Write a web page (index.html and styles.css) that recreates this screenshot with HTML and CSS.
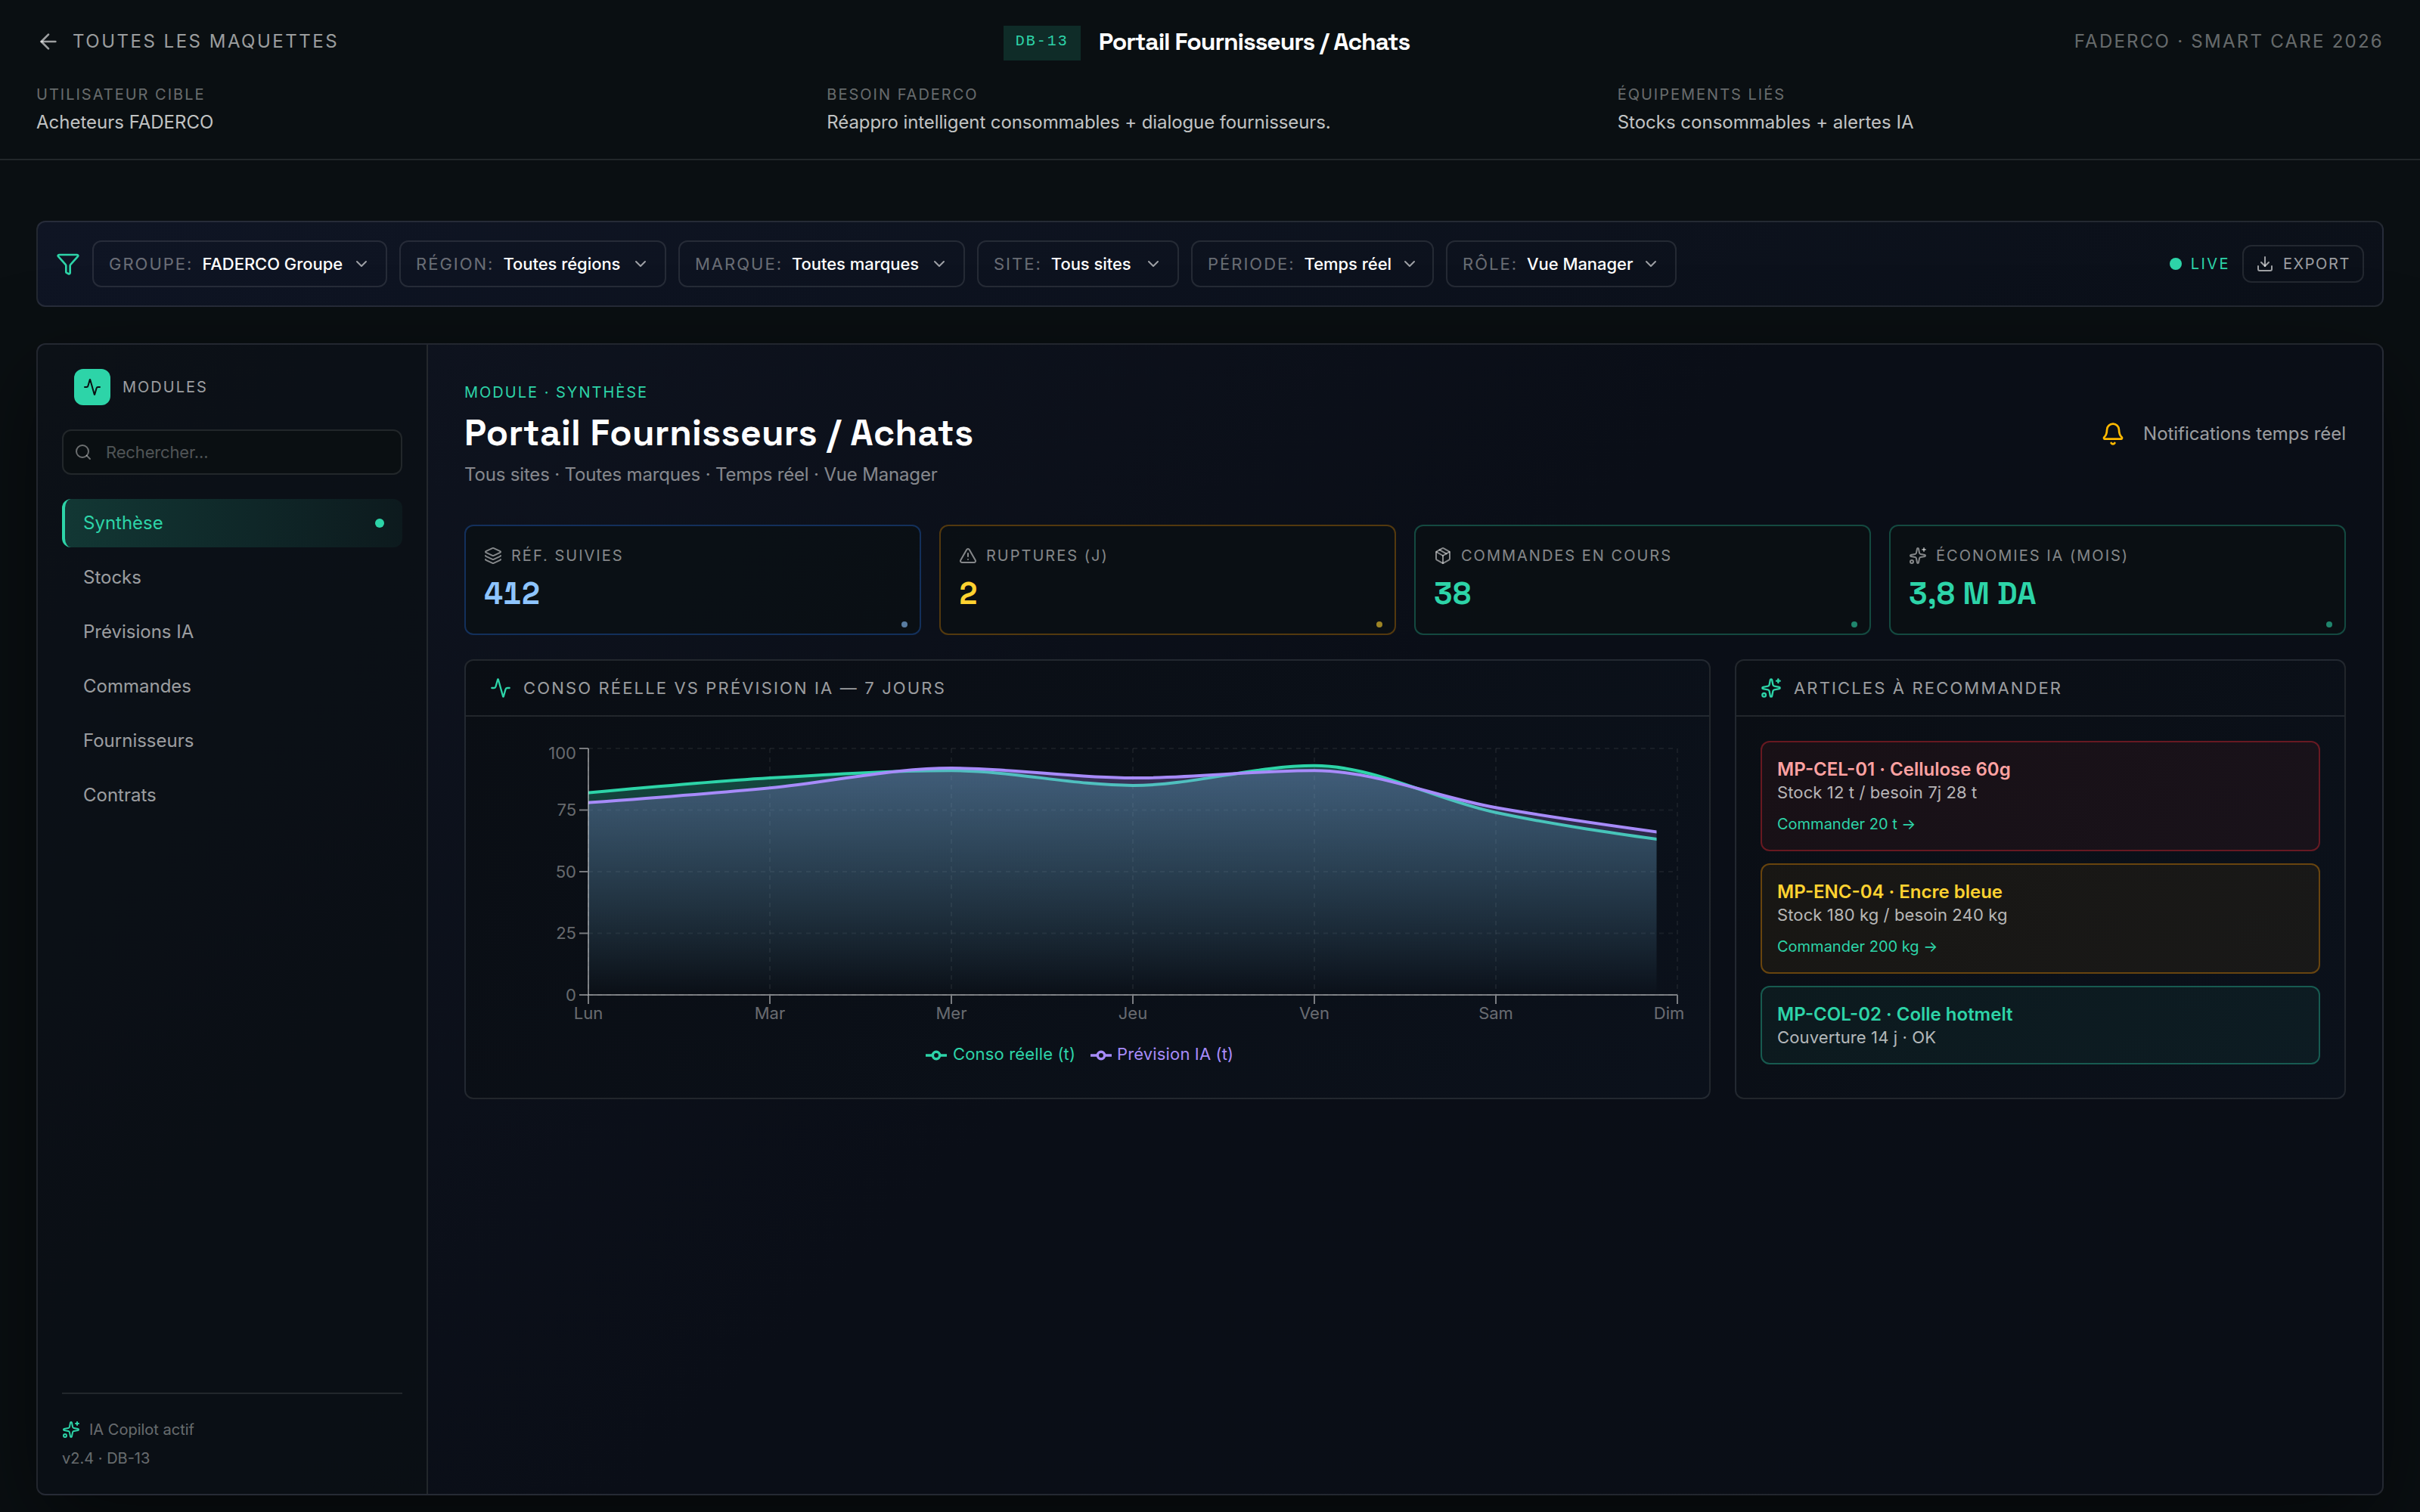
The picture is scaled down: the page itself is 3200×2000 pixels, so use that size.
FILE: index.html
```html
<!DOCTYPE html>
<html lang="fr">
<head>
    <meta charset="UTF-8">
    <meta name="viewport" content="width=device-width, initial-scale=1.0">
    <title>Portail Fournisseurs / Achats</title>
    <link rel="stylesheet" href="styles.css">
</head>
<body>
    <svg class="sprite" aria-hidden="true">
        <symbol id="i-arrow" viewBox="0 0 24 24"><path d="m12 19-7-7 7-7"/><path d="M19 12H5"/></symbol>
        <symbol id="i-funnel" viewBox="0 0 24 24"><path d="M10 20a1 1 0 0 0 .553.895l2 1A1 1 0 0 0 14 21v-7a2 2 0 0 1 .517-1.341L21.74 4.67A1 1 0 0 0 21 3H3a1 1 0 0 0-.742 1.67l7.225 7.989A2 2 0 0 1 10 14z"/></symbol>
        <symbol id="i-chevron" viewBox="0 0 24 24"><path d="m6 9 6 6 6-6"/></symbol>
        <symbol id="i-download" viewBox="0 0 24 24"><path d="M12 15V3"/><path d="M21 15v4a2 2 0 0 1-2 2H5a2 2 0 0 1-2-2v-4"/><path d="m7 10 5 5 5-5"/></symbol>
        <symbol id="i-activity" viewBox="0 0 24 24"><path d="M22 12h-2.48a2 2 0 0 0-1.93 1.46l-2.35 8.36a.25.25 0 0 1-.48 0L9.24 2.18a.25.25 0 0 0-.48 0l-2.35 8.36A2 2 0 0 1 4.49 12H2"/></symbol>
        <symbol id="i-search" viewBox="0 0 24 24"><path d="m21 21-4.34-4.34"/><circle cx="11" cy="11" r="8"/></symbol>
        <symbol id="i-sparkles" viewBox="0 0 24 24"><path d="M11.017 2.814a1 1 0 0 1 1.966 0l1.051 5.558a2 2 0 0 0 1.594 1.594l5.558 1.051a1 1 0 0 1 0 1.966l-5.558 1.051a2 2 0 0 0-1.594 1.594l-1.051 5.558a1 1 0 0 1-1.966 0l-1.051-5.558a2 2 0 0 0-1.594-1.594l-5.558-1.051a1 1 0 0 1 0-1.966l5.558-1.051a2 2 0 0 0 1.594-1.594z"/><path d="M20 2v4"/><path d="M22 4h-4"/><circle cx="4" cy="20" r="2"/></symbol>
        <symbol id="i-bell" viewBox="0 0 24 24"><path d="M10.268 21a2 2 0 0 0 3.464 0"/><path d="M3.262 15.326A1 1 0 0 0 4 17h16a1 1 0 0 0 .74-1.673C19.41 13.956 18 12.499 18 8A6 6 0 0 0 6 8c0 4.499-1.411 5.956-2.738 7.326"/></symbol>
        <symbol id="i-layers" viewBox="0 0 24 24"><path d="M12.83 2.18a2 2 0 0 0-1.66 0L2.6 6.08a1 1 0 0 0 0 1.83l8.58 3.91a2 2 0 0 0 1.66 0l8.58-3.9a1 1 0 0 0 0-1.83z"/><path d="M2 12a1 1 0 0 0 .58.91l8.6 3.91a2 2 0 0 0 1.65 0l8.58-3.9A1 1 0 0 0 22 12"/><path d="M2 17a1 1 0 0 0 .58.91l8.6 3.91a2 2 0 0 0 1.65 0l8.58-3.9A1 1 0 0 0 22 17"/></symbol>
        <symbol id="i-alert" viewBox="0 0 24 24"><path d="m21.73 18-8-14a2 2 0 0 0-3.48 0l-8 14A2 2 0 0 0 4 21h16a2 2 0 0 0 1.73-3"/><path d="M12 9v4"/><path d="M12 17h.01"/></symbol>
        <symbol id="i-package" viewBox="0 0 24 24"><path d="M11 21.73a2 2 0 0 0 2 0l7-4A2 2 0 0 0 21 16V8a2 2 0 0 0-1-1.73l-7-4a2 2 0 0 0-2 0l-7 4A2 2 0 0 0 3 8v8a2 2 0 0 0 1 1.73z"/><path d="M12 22V12"/><path d="M3.29 7 12 12l8.71-5"/><path d="m7.5 4.27 9 5.15"/></symbol>
    </svg>

    <header class="topbar">
        <div class="topbar-row">
            <a class="back"><svg class="icon"><use href="#i-arrow"/></svg><span>TOUTES LES MAQUETTES</span></a>
            <div class="topbar-title">
                <span class="code">DB-13</span>
                <span class="name">Portail Fournisseurs / Achats</span>
            </div>
            <span class="brand">FADERCO · SMART CARE 2026</span>
        </div>
        <div class="meta">
            <div>
                <p class="meta-label">UTILISATEUR CIBLE</p>
                <p class="meta-value">Acheteurs FADERCO</p>
            </div>
            <div>
                <p class="meta-label">BESOIN FADERCO</p>
                <p class="meta-value tight">Réappro intelligent consommables + dialogue fournisseurs.</p>
            </div>
            <div>
                <p class="meta-label">ÉQUIPEMENTS LIÉS</p>
                <p class="meta-value">Stocks consommables + alertes IA</p>
            </div>
        </div>
    </header>

    <section class="filters">
        <svg class="icon icon-lg accent"><use href="#i-funnel"/></svg>
        <button class="filter groupe"><span class="key">GROUPE:</span><span class="val">FADERCO Groupe</span><svg class="icon"><use href="#i-chevron"/></svg></button>
        <button class="filter region"><span class="key">RÉGION:</span><span class="val">Toutes régions</span><svg class="icon"><use href="#i-chevron"/></svg></button>
        <button class="filter marque"><span class="key">MARQUE:</span><span class="val">Toutes marques</span><svg class="icon"><use href="#i-chevron"/></svg></button>
        <button class="filter site"><span class="key">SITE:</span><span class="val">Tous sites</span><svg class="icon"><use href="#i-chevron"/></svg></button>
        <button class="filter periode"><span class="key">PÉRIODE:</span><span class="val">Temps réel</span><svg class="icon"><use href="#i-chevron"/></svg></button>
        <button class="filter role"><span class="key">RÔLE:</span><span class="val">Vue Manager</span><svg class="icon"><use href="#i-chevron"/></svg></button>
        <div class="filters-end">
            <span class="live"><i></i><span>LIVE</span></span>
            <button class="export"><svg class="icon"><use href="#i-download"/></svg><span>EXPORT</span></button>
        </div>
    </section>

    <div class="shell">
        <aside class="sidebar">
            <div class="modules"><span class="logo"><svg class="icon"><use href="#i-activity"/></svg></span><span class="modules-text">MODULES</span></div>
            <div class="search"><svg class="icon"><use href="#i-search"/></svg><span>Rechercher...</span></div>
            <nav>
                <a class="nav-item active"><span>Synthèse</span><i></i></a>
                <a class="nav-item">Stocks</a>
                <a class="nav-item">Prévisions IA</a>
                <a class="nav-item">Commandes</a>
                <a class="nav-item">Fournisseurs</a>
                <a class="nav-item">Contrats</a>
            </nav>
            <div class="sidebar-foot">
                <div class="copilot"><svg class="icon accent"><use href="#i-sparkles"/></svg><span>IA Copilot actif</span></div>
                <div>v2.4 · DB-13</div>
            </div>
        </aside>

        <main class="content">
            <div class="head">
                <div>
                    <p class="eyebrow">MODULE · SYNTHÈSE</p>
                    <h1>Portail Fournisseurs / Achats</h1>
                    <p class="sub">Tous sites · Toutes marques · Temps réel · Vue Manager</p>
                </div>
                <div class="notif"><svg class="icon icon-lg"><use href="#i-bell"/></svg><span>Notifications temps réel</span></div>
            </div>

            <div class="kpis">
                <div class="kpi blue">
                    <div class="kpi-label"><svg class="icon"><use href="#i-layers"/></svg><span>RÉF. SUIVIES</span></div>
                    <div class="kpi-value">412</div>
                    <i></i>
                </div>
                <div class="kpi amber">
                    <div class="kpi-label"><svg class="icon"><use href="#i-alert"/></svg><span>RUPTURES (J)</span></div>
                    <div class="kpi-value">2</div>
                    <i></i>
                </div>
                <div class="kpi green">
                    <div class="kpi-label"><svg class="icon"><use href="#i-package"/></svg><span>COMMANDES EN COURS</span></div>
                    <div class="kpi-value">38</div>
                    <i></i>
                </div>
                <div class="kpi green">
                    <div class="kpi-label"><svg class="icon"><use href="#i-sparkles"/></svg><span>ÉCONOMIES IA (MOIS)</span></div>
                    <div class="kpi-value">3,8 M DA</div>
                    <i></i>
                </div>
            </div>

            <div class="panels">
                <section class="panel">
                    <h2><svg class="icon accent"><use href="#i-activity"/></svg><span>CONSO RÉELLE VS PRÉVISION IA — 7 JOURS</span></h2>
                    <div class="panel-body">
                        <svg class="chart" width="1580" height="440" viewBox="0 0 1580 440">
                            <defs>
                                <linearGradient id="gConso" x1="0" y1="0" x2="0" y2="1"><stop offset="0" stop-color="#2dd4a8" stop-opacity=".3"/><stop offset="1" stop-color="#2dd4a8" stop-opacity="0"/></linearGradient>
                                <linearGradient id="gPrev" x1="0" y1="0" x2="0" y2="1"><stop offset="0" stop-color="#a78bfa" stop-opacity=".3"/><stop offset="1" stop-color="#a78bfa" stop-opacity="0"/></linearGradient>
                                <clipPath id="reveal"><rect x="130" y="0" width="1412.5" height="346"/></clipPath>
                            </defs>
                            <g class="grid">
                                <path d="M130 10H1570M130 91.5H1570M130 173H1570M130 254.5H1570M130 336H1570"/>
                                <path d="M130 10V336M370 10V336M610 10V336M850 10V336M1090 10V336M1330 10V336M1570 10V336"/>
                            </g>
                            <g clip-path="url(#reveal)">
                                <path fill="url(#gConso)" d="M130,68.68C210,61.35 290,54.01 370,49.12C450,44.23 530,39.34 610,39.34C690,39.34 770,58.9 850,58.9C930,58.9 1010,32.82 1090,32.82C1170,32.82 1250,77.92 1330,94.76C1410,111.6 1490,122.74 1570,133.88V336H130Z"/>
                                <path class="line conso" d="M130,68.68C210,61.35 290,54.01 370,49.12C450,44.23 530,39.34 610,39.34C690,39.34 770,58.9 850,58.9C930,58.9 1010,32.82 1090,32.82C1170,32.82 1250,77.92 1330,94.76C1410,111.6 1490,122.74 1570,133.88"/>
                                <path fill="url(#gPrev)" d="M130,81.72C210,75.74 290,69.77 370,62.16C450,54.55 530,36.08 610,36.08C690,36.08 770,49.12 850,49.12C930,49.12 1010,39.34 1090,39.34C1170,39.34 1250,74.11 1330,88.24C1410,102.37 1490,113.23 1570,124.1V336H130Z"/>
                                <path class="line prev" d="M130,81.72C210,75.74 290,69.77 370,62.16C450,54.55 530,36.08 610,36.08C690,36.08 770,49.12 850,49.12C930,49.12 1010,39.34 1090,39.34C1170,39.34 1250,74.11 1330,88.24C1410,102.37 1490,113.23 1570,124.1"/>
                            </g>
                            <g class="axis">
                                <path d="M130 10V336M118 10H130M118 91.5H130M118 173H130M118 254.5H130M118 336H130"/>
                                <path d="M130 336H1570M130 336V348M370 336V348M610 336V348M850 336V348M1090 336V348M1330 336V348M1570 336V348"/>
                            </g>
                            <g class="ticks" text-anchor="end">
                                <text x="114" y="24">100</text>
                                <text x="114" y="99">75</text>
                                <text x="114" y="181">50</text>
                                <text x="114" y="262">25</text>
                                <text x="114" y="344">0</text>
                            </g>
                            <g class="ticks" text-anchor="middle">
                                <text x="130" y="368">Lun</text>
                                <text x="370" y="368">Mar</text>
                                <text x="610" y="368">Mer</text>
                                <text x="850" y="368">Jeu</text>
                                <text x="1090" y="368">Ven</text>
                                <text x="1330" y="368">Sam</text>
                                <text x="1559" y="368">Dim</text>
                            </g>
                            <g class="legend conso"><path transform="translate(576 402) scale(.875)" d="M0,16h10.667A5.333,5.333,0,1,1,21.333,16H32M21.333,16A5.333,5.333,0,1,1,10.667,16"/><text x="612" y="422">Conso réelle (t)</text></g>
                            <g class="legend prev"><path transform="translate(794 402) scale(.875)" d="M0,16h10.667A5.333,5.333,0,1,1,21.333,16H32M21.333,16A5.333,5.333,0,1,1,10.667,16"/><text x="829" y="422">Prévision IA (t)</text></g>
                        </svg>
                    </div>
                </section>

                <section class="panel">
                    <h2><svg class="icon accent"><use href="#i-sparkles"/></svg><span>ARTICLES À RECOMMANDER</span></h2>
                    <div class="panel-body items">
                        <div class="item red">
                            <p class="item-name">MP-CEL-01 · Cellulose 60g</p>
                            <p class="item-info">Stock 12 t / besoin 7j 28 t</p>
                            <a>Commander 20 t →</a>
                        </div>
                        <div class="item amber">
                            <p class="item-name">MP-ENC-04 · Encre bleue</p>
                            <p class="item-info">Stock 180 kg / besoin 240 kg</p>
                            <a>Commander 200 kg →</a>
                        </div>
                        <div class="item green">
                            <p class="item-name">MP-COL-02 · Colle hotmelt</p>
                            <p class="item-info">Couverture 14 j · OK</p>
                        </div>
                    </div>
                </section>
            </div>
        </main>
    </div>
</body>
</html>
```
FILE: styles.css
```css
* {
    box-sizing: border-box;
    margin: 0;
    padding: 0;
}

body {
    height: 2000px;
    overflow: hidden;
    font-family: Inter, sans-serif;
    font-size: 24px;
    line-height: 1.5;
    color: #ffffff;
    background-color: #0a0f12;
}

button {
    font: inherit;
    color: inherit;
    background: none;
}

.sprite {
    position: absolute;
    width: 0;
    height: 0;
}

.icon {
    width: 24px;
    height: 24px;
    flex: none;
    fill: none;
    stroke: currentColor;
    stroke-width: 2;
    stroke-linecap: round;
    stroke-linejoin: round;
}

.icon-lg {
    width: 32px;
    height: 32px;
}

.accent {
    color: #2dd4a8;
}

/* En-tête */
.topbar {
    height: 212px;
    padding: 32px 48px 0;
    border-bottom: 2px solid rgba(255, 255, 255, 0.1);
}

.topbar-row {
    display: flex;
    justify-content: space-between;
    align-items: center;
    height: 46px;
}

.back {
    display: flex;
    align-items: center;
    gap: 16px;
    color: rgba(255, 255, 255, 0.6);
    letter-spacing: 2.5px;
}

.back .icon {
    width: 32px;
    height: 32px;
}

.topbar-title {
    display: flex;
    align-items: center;
    gap: 24px;
}

.code {
    margin-top: 4px;
    padding: 10px 16px 14px;
    font-family: "Liberation Mono", monospace;
    font-size: 20px;
    line-height: 22px;
    letter-spacing: 2px;
    color: #2dd4a8;
    background-color: rgba(45, 212, 168, 0.15);
}

.name {
    font-family: "Space Grotesk", Inter, sans-serif;
    font-size: 32px;
    font-weight: 600;
    letter-spacing: -1.1px;
}

.brand {
    color: rgba(255, 255, 255, 0.4);
    letter-spacing: 2.25px;
}

.meta {
    display: grid;
    grid-template-columns: repeat(3, 1fr);
    gap: 32px;
    margin-top: 32px;
}

.meta-label {
    font-size: 20px;
    line-height: 30px;
    letter-spacing: 2px;
    color: rgba(255, 255, 255, 0.4);
}

.meta-value {
    margin-top: 4px;
    color: rgba(255, 255, 255, 0.75);
}

.meta-value.tight {
    letter-spacing: -0.1px;
}

/* Barre de filtres */
.filters {
    display: flex;
    align-items: center;
    gap: 16px;
    height: 114px;
    margin: 80px 48px 48px;
    padding: 0 24px;
    border: 2px solid rgba(255, 255, 255, 0.1);
    border-radius: 12px;
    background: linear-gradient(135deg, #0f1524, #0b1019);
}

.filter {
    display: flex;
    align-items: center;
    gap: 12px;
    height: 62px;
    padding: 0 20px;
    font-size: 22px;
    white-space: nowrap;
    border: 2px solid rgba(255, 255, 255, 0.1);
    border-radius: 12px;
}

.filter.groupe { width: 390px; }
.filter.region { width: 353px; }
.filter.marque { width: 379px; }
.filter.site { width: 267px; }
.filter.periode { width: 321px; }
.filter.role { width: 305px; }

.filter .key {
    color: rgba(255, 255, 255, 0.4);
    letter-spacing: 2px;
}

.filter .val {
    font-weight: 500;
    letter-spacing: -0.05px;
}

.filter .icon {
    margin-left: auto;
    color: rgba(255, 255, 255, 0.6);
}

.filters-end {
    display: flex;
    align-items: center;
    gap: 16px;
    margin-left: auto;
    font-size: 20px;
}

.live {
    display: flex;
    align-items: center;
    gap: 12px;
    letter-spacing: 2.4px;
    color: #2dd4a8;
}

.live i {
    width: 16px;
    height: 16px;
    border-radius: 50%;
    background-color: #2dd4a8;
}

.export {
    display: flex;
    align-items: center;
    gap: 12px;
    height: 50px;
    padding: 0 16px;
    letter-spacing: 1.6px;
    color: rgba(255, 255, 255, 0.6);
    border: 2px solid rgba(255, 255, 255, 0.1);
    border-radius: 12px;
}

/* Cadre principal */
.shell {
    display: flex;
    height: 1524px;
    margin: 0 48px;
    border: 2px solid rgba(255, 255, 255, 0.1);
    border-radius: 12px;
    background: linear-gradient(135deg, #0f1420 0%, #0a0e17 50%, #0a0e16 100%);
    box-shadow: 0 40px 120px rgba(0, 0, 0, 0.5);
}

.sidebar {
    display: flex;
    flex-direction: column;
    width: 516px;
    padding: 32px;
    border-right: 2px solid rgba(255, 255, 255, 0.1);
    background-color: rgba(10, 15, 18, 0.6);
    border-radius: 10px 0 0 10px;
}

.modules {
    display: flex;
    align-items: center;
    gap: 16px;
    padding-left: 16px;
}

.logo {
    display: flex;
    align-items: center;
    justify-content: center;
    width: 48px;
    height: 48px;
    border-radius: 12px;
    color: #0a0f12;
    background-color: #2dd4a8;
}

.modules-text {
    font-size: 20px;
    letter-spacing: 2px;
    color: rgba(255, 255, 255, 0.6);
}

.search {
    display: flex;
    align-items: center;
    gap: 18px;
    height: 60px;
    margin: 32px 0;
    padding: 0 14px;
    font-size: 22px;
    letter-spacing: -0.15px;
    color: rgba(255, 255, 255, 0.3);
    border: 2px solid rgba(255, 255, 255, 0.1);
    border-radius: 12px;
    background-color: #0a0f12;
}

.search .icon {
    color: rgba(255, 255, 255, 0.4);
}

nav {
    display: flex;
    flex-direction: column;
    gap: 8px;
}

.nav-item {
    display: flex;
    align-items: center;
    justify-content: space-between;
    height: 64px;
    padding: 0 24px;
    border-left: 4px solid transparent;
    border-radius: 12px;
    color: rgba(255, 255, 255, 0.6);
}

.nav-item.active {
    color: #2dd4a8;
    border-left-color: #2dd4a8;
    background: linear-gradient(90deg, rgba(45, 212, 168, 0.2), rgba(45, 212, 168, 0.05));
}

.nav-item i {
    width: 12px;
    height: 12px;
    border-radius: 50%;
    background-color: #2dd4a8;
}

.sidebar-foot {
    display: flex;
    flex-direction: column;
    gap: 8px;
    margin-top: auto;
    padding-top: 32px;
    font-size: 20px;
    line-height: 30px;
    color: rgba(255, 255, 255, 0.4);
    border-top: 2px solid rgba(255, 255, 255, 0.1);
}

.copilot {
    display: flex;
    align-items: center;
    gap: 12px;
}

.content {
    flex: 1;
    padding: 48px;
}

.head {
    display: flex;
    justify-content: space-between;
    align-items: center;
    height: 142px;
}

.eyebrow {
    font-size: 20px;
    line-height: 30px;
    letter-spacing: 2px;
    color: #2dd4a8;
}

h1 {
    margin: 8px 0 6px;
    font-family: "Space Grotesk", Inter, sans-serif;
    font-size: 48px;
    font-weight: 700;
    line-height: 62px;
    letter-spacing: 0.3px;
}

.sub {
    letter-spacing: -0.17px;
    color: rgba(255, 255, 255, 0.5);
}

.notif {
    display: flex;
    align-items: center;
    gap: 24px;
    margin-bottom: 2px;
    letter-spacing: -0.05px;
    color: rgba(255, 255, 255, 0.6);
}

.notif .icon {
    color: #ffb900;
}

/* Indicateurs */
.kpis {
    display: grid;
    grid-template-columns: repeat(4, 1fr);
    gap: 24px;
    margin: 48px 0 32px;
}

.kpi {
    position: relative;
    height: 146px;
    padding: 24px;
    border: 2px solid;
    border-radius: 12px;
    background-color: rgba(10, 15, 18, 0.7);
}

.kpi-label {
    display: flex;
    align-items: center;
    gap: 12px;
    margin-bottom: 8px;
    font-size: 20px;
    line-height: 30px;
    letter-spacing: 2px;
    color: rgba(255, 255, 255, 0.5);
}

.kpi-value {
    font-family: "Space Grotesk", Inter, sans-serif;
    font-size: 40px;
    font-weight: 700;
    line-height: 56px;
    font-variant-numeric: tabular-nums;
}

.kpi i {
    position: absolute;
    right: 16px;
    bottom: 8px;
    width: 8px;
    height: 8px;
    border-radius: 50%;
    background-color: currentColor;
    opacity: 0.6;
}

.kpi.blue {
    color: #8ec5ff;
    border-color: rgba(43, 127, 255, 0.3);
}

.kpi.amber {
    color: #ffd230;
    border-color: rgba(254, 154, 0, 0.3);
}

.kpi.green {
    color: #2dd4a8;
    border-color: rgba(45, 212, 168, 0.3);
}

/* Panneaux */
.panels {
    display: grid;
    grid-template-columns: 1648px 808px;
    gap: 32px;
}

.panel {
    height: 582px;
    border: 2px solid rgba(255, 255, 255, 0.1);
    border-radius: 12px;
    background: linear-gradient(135deg, #0a0e14, #0b111b);
}

.panel h2 {
    display: flex;
    align-items: center;
    gap: 16px;
    height: 74px;
    padding: 0 32px;
    font-size: 22px;
    font-weight: 400;
    letter-spacing: 2.15px;
    color: rgba(255, 255, 255, 0.6);
    border-bottom: 2px solid rgba(255, 255, 255, 0.1);
}

.panel h2 .icon {
    width: 28px;
    height: 28px;
}

.panel-body {
    padding: 32px;
}

.chart {
    display: block;
    font-size: 22px;
}

.grid {
    fill: none;
    stroke: rgba(255, 255, 255, 0.06);
    stroke-width: 2;
    stroke-dasharray: 6 6;
}

.axis {
    fill: none;
    stroke: rgba(255, 255, 255, 0.45);
    stroke-width: 2;
}

.ticks {
    fill: rgba(255, 255, 255, 0.4);
}

.line {
    fill: none;
    stroke-width: 4;
}

.line.conso {
    stroke: #2dd4a8;
}

.line.prev {
    stroke: #a78bfa;
}

.legend path {
    fill: none;
    stroke-width: 4;
}

.legend.conso {
    fill: #2dd4a8;
    stroke: #2dd4a8;
}

.legend.prev {
    fill: #a78bfa;
    stroke: #a78bfa;
}

.legend text {
    stroke: none;
    letter-spacing: 0.15px;
}

.items {
    display: flex;
    flex-direction: column;
    gap: 16px;
}

.item {
    padding: 21px 20px 19px;
    line-height: 30px;
    border: 2px solid;
    border-radius: 12px;
}

.item-name {
    font-size: 24px;
    font-weight: 600;
}

.item-info {
    font-size: 22px;
    letter-spacing: 0.12px;
    color: rgba(255, 255, 255, 0.7);
}

.item a {
    display: block;
    margin-top: 12px;
    font-size: 20px;
    color: #2dd4a8;
}

.item.red {
    color: #ffa2a2;
    border-color: rgba(251, 44, 54, 0.35);
    background-color: rgba(251, 44, 54, 0.06);
}

.item.amber {
    color: #ffd230;
    border-color: rgba(254, 154, 0, 0.35);
    background-color: rgba(254, 154, 0, 0.06);
}

.item.green {
    color: #2dd4a8;
    border-color: rgba(45, 212, 168, 0.35);
    background-color: rgba(45, 212, 168, 0.06);
}
```
